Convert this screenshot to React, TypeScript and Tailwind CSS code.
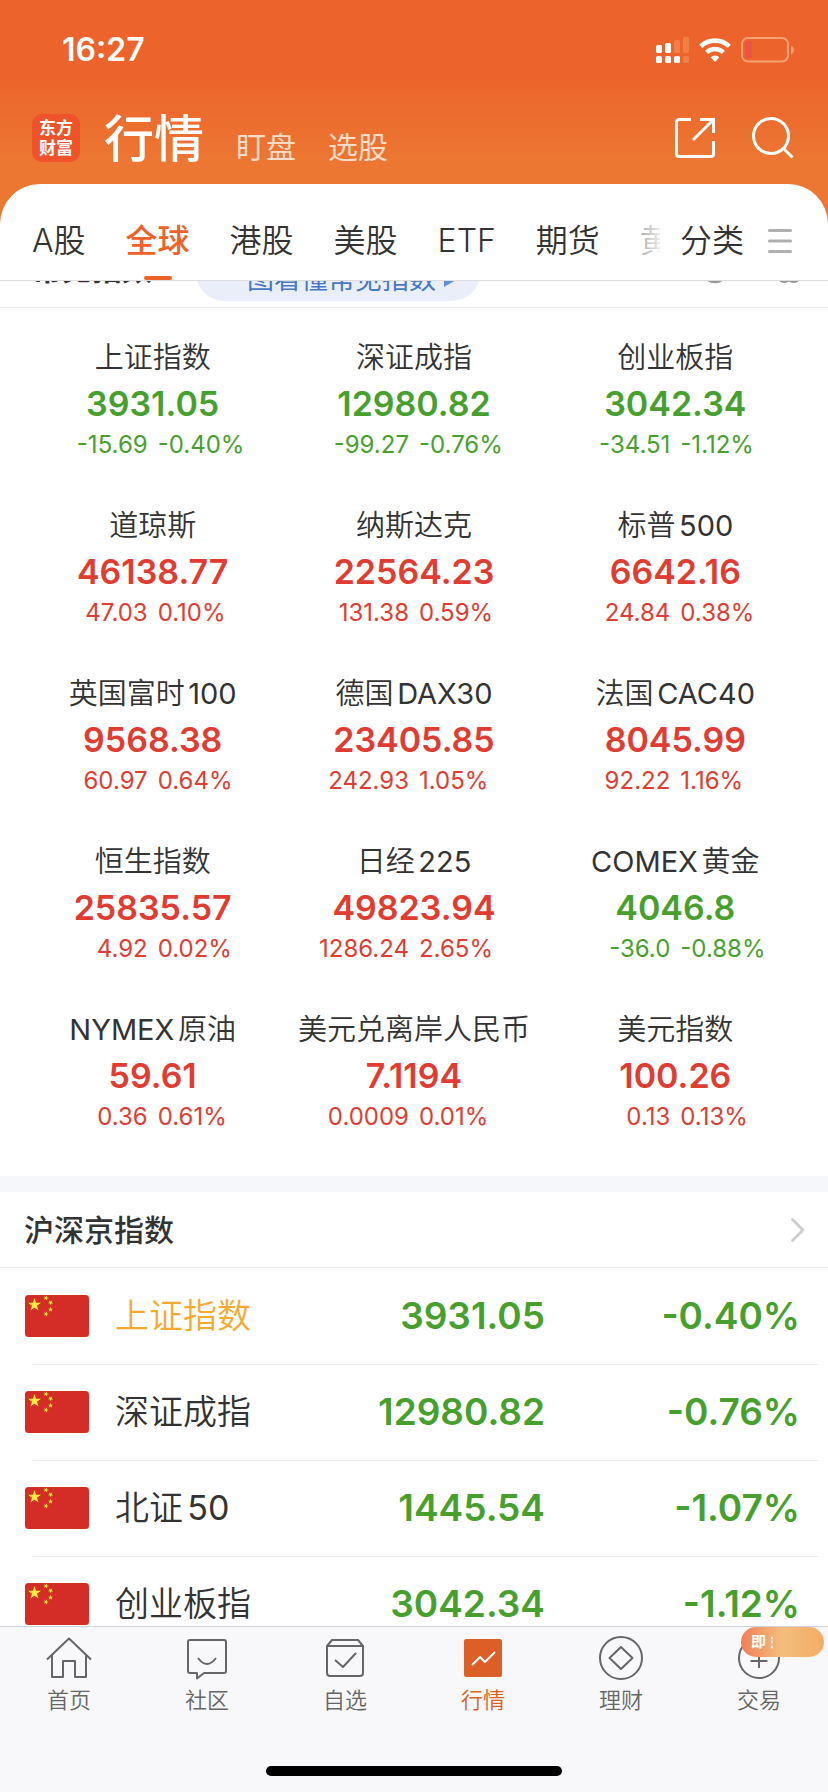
import type { ReactNode } from "react";

type Quote = { name: string; value: string; change: string; percent: string };

const quotes: Quote[] = [
  { name: "上证指数", value: "3931.05", change: "-15.69", percent: "-0.40%" },
  { name: "深证成指", value: "12980.82", change: "-99.27", percent: "-0.76%" },
  { name: "创业板指", value: "3042.34", change: "-34.51", percent: "-1.12%" },
  { name: "道琼斯", value: "46138.77", change: "47.03", percent: "0.10%" },
  { name: "纳斯达克", value: "22564.23", change: "131.38", percent: "0.59%" },
  { name: "标普500", value: "6642.16", change: "24.84", percent: "0.38%" },
  { name: "英国富时100", value: "9568.38", change: "60.97", percent: "0.64%" },
  { name: "德国DAX30", value: "23405.85", change: "242.93", percent: "1.05%" },
  { name: "法国CAC40", value: "8045.99", change: "92.22", percent: "1.16%" },
  { name: "恒生指数", value: "25835.57", change: "4.92", percent: "0.02%" },
  { name: "日经225", value: "49823.94", change: "1286.24", percent: "2.65%" },
  { name: "COMEX黄金", value: "4046.8", change: "-36.0", percent: "-0.88%" },
  { name: "NYMEX原油", value: "59.61", change: "0.36", percent: "0.61%" },
  { name: "美元兑离岸人民币", value: "7.1194", change: "0.0009", percent: "0.01%" },
  { name: "美元指数", value: "100.26", change: "0.13", percent: "0.13%" },
];

const domestic = [
  { name: "上证指数", value: "3931.05", percent: "-0.40%", marked: true },
  { name: "深证成指", value: "12980.82", percent: "-0.76%", marked: false },
  { name: "北证50", value: "1445.54", percent: "-1.07%", marked: false },
  { name: "创业板指", value: "3042.34", percent: "-1.12%", marked: false },
];

// Latin letters and digits look thinner than the Chinese glyphs beside them, so they get the regular weight.
function MixedText({ text }: { text: string }) {
  return (
    <>
      {text.split(/([A-Za-z0-9]+)/).map((part, index) =>
        index % 2 === 1 ? (
          <span key={index} className="font-normal">
            {part}
          </span>
        ) : (
          part
        ),
      )}
    </>
  );
}

function StatusBar() {
  return (
    <div className="flex h-[100px] items-center justify-between pr-[33px] pl-[62px]">
      <span className="text-[32px] leading-10 font-semibold">16:27</span>
      <div className="flex items-center gap-2.5">
        <svg width="33" height="26" viewBox="0 0 33 26" fill="currentColor" aria-hidden="true">
          <rect x="0" y="8" width="6" height="8" rx="1.6" />
          <rect x="9" y="6" width="6" height="10" rx="1.6" />
          <rect x="18" y="3" width="6" height="13" rx="1.6" fill="#f08048" />
          <rect x="27" y="0" width="6" height="16" rx="1.6" fill="#f08048" />
          <rect x="0" y="19" width="6" height="7" rx="1.6" />
          <rect x="9" y="19" width="6" height="7" rx="1.6" />
          <rect x="18" y="19" width="6" height="7" rx="1.6" />
          <rect x="27" y="19" width="6" height="7" rx="1.6" fill="#f08048" />
        </svg>
        <svg width="32" height="24" viewBox="0 0 32 24" fill="none" stroke="currentColor" aria-hidden="true">
          <path d="M1.8 8.4a20.4 20.4 0 0 1 28.4 0" strokeWidth="4.6" />
          <path d="M7.6 14.4a12.2 12.2 0 0 1 16.8 0" strokeWidth="4.4" />
          <path d="M11.6 19.2a6.4 6.4 0 0 1 8.8 0L16 24z" fill="currentColor" stroke="none" />
        </svg>
        <svg width="54" height="26" viewBox="0 0 54 26" fill="none" aria-hidden="true">
          <rect x="1" y="1" width="46" height="23.500" rx="6" stroke="#f3a273" strokeWidth="2" />
          <rect x="4" y="4" width="7" height="17.500" rx="3" fill="#ea5545" />
          <path d="M50 8.500c4 1.500 4 7.500 0 9z" fill="#f3a273" />
        </svg>
      </div>
    </div>
  );
}

function Header() {
  return (
    <header className="flex items-start justify-between pt-3.5 pr-[34px] pl-8">
      <div className="flex items-start">
        <div className="flex size-12 flex-col items-center justify-center rounded-[10px] bg-[#ee532b] text-[17px] leading-5 font-bold">
          <span>东方</span>
          <span>财富</span>
        </div>
        <nav className="-mt-[5px] ml-6 flex items-end gap-8">
          <a href="#quotes" className="text-[50px] leading-[60px] font-medium">
            行情
          </a>
          <a href="#watch" className="text-[30px] leading-[44px] text-[#fbdcc9]">
            盯盘
          </a>
          <a href="#pick" className="text-[30px] leading-[44px] text-[#fbdcc9]">
            选股
          </a>
        </nav>
      </div>
      <div className="flex gap-[36px] pt-[3px]">
        <button type="button" aria-label="分享">
          <svg width="42" height="42" viewBox="0 0 42 42" fill="none" stroke="currentColor" strokeWidth="3">
            <path d="M17 2.500H5A2.500 2.500 0 0 0 2.500 5v32A2.500 2.500 0 0 0 5 39.500h32a2.500 2.500 0 0 0 2.500-2.500V24" />
            <path d="M26 2.500h13.500V16M39 3 19 23" />
          </svg>
        </button>
        <button type="button" aria-label="搜索">
          <svg width="42" height="42" viewBox="0 0 42 42" fill="none" stroke="currentColor" strokeWidth="3">
            <circle cx="19" cy="19" r="17.500" />
            <path d="m31.500 31.500 9 9" />
          </svg>
        </button>
      </div>
    </header>
  );
}

function MarketTabs() {
  const tabs = ["A股", "全球", "港股", "美股", "ETF", "期货", "黄金"];
  return (
    <div className="flex h-[97px] shrink-0 items-stretch border-b border-[#dddddf] pl-8 text-[32px] leading-10 font-[350]">
      <nav className="relative flex min-w-0 flex-1 gap-10 overflow-hidden whitespace-nowrap">
        {tabs.map((tab) =>
          tab === "全球" ? (
            <a key={tab} href="#global" aria-current="page" className="flex flex-col items-center justify-between pt-[37px] font-medium text-[#ee6228]">
              {tab}
              <span className="h-1 w-7 rounded-full bg-[#ee6228]" />
            </a>
          ) : (
            <a key={tab} href="#market" className="pt-[37px]">
              {tab}
            </a>
          ),
        )}
        <span className="absolute inset-y-0 right-0 w-10 bg-linear-to-r from-white/30 to-white/90" />
      </nav>
      <button type="button" className="flex items-start gap-6 pt-[37px] pr-9 pl-5">
        分类
        <svg className="mt-2" width="24" height="24" viewBox="0 0 24 24" stroke="#b0b0b0" strokeWidth="3" strokeLinecap="round" aria-hidden="true">
          <path d="M1.500 1.500h21M1.500 12h21M1.500 22.500h21" />
        </svg>
      </button>
    </div>
  );
}

function CommonHeader() {
  return (
    <div className="flex h-[77px] items-center border-b border-[#ececec] pr-6 pl-8">
      <h2 className="text-[30px] leading-10 font-bold">常见指数</h2>
      <a href="#guide" className="mt-2 ml-11 flex h-14 items-center gap-2 rounded-full bg-[#e9eef8] pt-3.5 pr-6 pl-6 text-[27px] leading-9 text-[#4878c4]">
        一图看懂常见指数
        <svg width="12" height="14" viewBox="0 0 12 14" fill="#6090d4" aria-hidden="true">
          <path d="M0 0l12 7-12 7z" />
        </svg>
      </a>
      <div className="ml-auto flex gap-11 text-[#999999]">
        <button type="button" aria-label="帮助">
          <svg width="30" height="30" viewBox="0 0 30 30" fill="none" stroke="currentColor" strokeWidth="2.500">
            <circle cx="15" cy="15" r="13" />
            <path d="M11 12a4 4 0 1 1 5.500 3.500q-1.500.8-1.500 3M15 20v2.500" />
          </svg>
        </button>
        <button type="button" aria-label="设置">
          <svg width="30" height="30" viewBox="0 0 30 30" fill="none" stroke="currentColor" strokeWidth="2.500" strokeLinejoin="round">
            <path d="M8 3q3 2 7 0 4 2 7 0l6 8q-3 4 0 8l-5 8q-4 2-8-1-4 3-8 1l-5-8q3-4 0-8z" />
            <circle cx="15" cy="15" r="4.500" />
          </svg>
        </button>
      </div>
    </div>
  );
}

function QuoteCard({ name, value, change, percent, down }: Quote & { down: boolean }) {
  return (
    <a href="#quote" className={down ? "block pb-[42px] text-[#47a02d]" : "block pb-[42px] text-[#e03c32]"}>
      <div className="text-center text-[29px] leading-[44px] font-[350] whitespace-nowrap text-[#333333] [text-autospace:normal]">
        <MixedText text={name} />
      </div>
      <div className="text-center text-[34px] leading-[48px] font-semibold">{value}</div>
      <div className="grid grid-cols-2 gap-2.5 text-[24px] leading-[34px]">
        <span className="text-right">{change}</span>
        <span>{percent}</span>
      </div>
    </a>
  );
}

const STAR = "M0-1 .225-.309.951-.309.363.118.588.809 0 .382-.588.809-.363.118-.951-.309-.225-.309z";

function Flag() {
  return (
    <svg className="-ml-2 block" width="64" height="42" viewBox="0 0 64 42" role="img" aria-label="中国">
      <rect width="64" height="42" rx="3.500" fill="#d42c27" />
      <g fill="#fbea3c">
        <path d={STAR} transform="translate(9.500 10) scale(6.900)" />
        <path d={STAR} transform="translate(21 3) rotate(20) scale(2.800)" />
        <path d={STAR} transform="translate(25.500 7.500) rotate(40) scale(2.800)" />
        <path d={STAR} transform="translate(25.500 14.500) scale(2.800)" />
        <path d={STAR} transform="translate(21 19) rotate(20) scale(2.800)" />
      </g>
    </svg>
  );
}

function DomesticList() {
  return (
    <section>
      <a href="#domestic" className="flex h-[76px] items-center justify-between border-b border-[#ececec] pr-[23px] pl-6">
        <h2 className="text-[30px] leading-10 font-medium">沪深京指数</h2>
        <svg width="14" height="24" viewBox="0 0 14 24" fill="none" stroke="#cccccc" strokeWidth="2.800" strokeLinecap="round" strokeLinejoin="round" aria-hidden="true">
          <path d="M1.500 1.500 12 12 1.500 22.500" />
        </svg>
      </a>
      <div className="pr-2.5 pl-[33px]">
        <table className="w-full" aria-label="沪深京指数">
          <tbody>
            {domestic.map((row) => (
              <tr key={row.name} className="h-24 border-b border-[#ececec] text-[37px] leading-[48px] font-semibold text-[#47a02d]">
                <td className="w-[82px] p-0">
                  <Flag />
                </td>
                <th
                  scope="row"
                  className={
                    row.marked
                      ? "p-0 text-left text-[34px] font-[350] text-[#f5a931]"
                      : "p-0 text-left text-[34px] font-[350] text-[#333333] [text-autospace:normal]"
                  }
                >
                  <MixedText text={row.name} />
                </th>
                <td className="p-0 text-right">{row.value}</td>
                <td className="w-[273px] p-0 pr-[18px] text-right">{row.percent}</td>
              </tr>
            ))}
          </tbody>
        </table>
      </div>
    </section>
  );
}

function NavItem({ label, active, badge, children }: { label: string; active?: boolean; badge?: ReactNode; children: ReactNode }) {
  return (
    <a
      href="#nav"
      aria-current={active ? "page" : undefined}
      className={
        active
          ? "relative flex flex-1 flex-col items-center pt-2 text-[#dc5f27]"
          : "relative flex flex-1 flex-col items-center pt-2 text-[#666666]"
      }
    >
      <svg width="46" height="46" viewBox="0 0 46 46" fill="none" stroke="currentColor" strokeWidth="2" strokeLinejoin="round">
        {children}
      </svg>
      <span className="mt-[3px] text-[22px] leading-8 font-[350]">{label}</span>
      {badge}
    </a>
  );
}

function BottomNav() {
  return (
    <footer className="flex h-[166px] shrink-0 flex-col justify-between border-t border-[#d2d2dc] bg-[#f8f8fa] pb-4">
      <nav className="flex">
        <NavItem label="首页">
          <path d="M1 24.500 23 3.500l22 21M6 20v22h11V26h12v16h11V20" />
        </NavItem>
        <NavItem label="社区">
          <path d="M6 5h34a2 2 0 0 1 2 2v29a2 2 0 0 1-2 2H20l-7 5.500V38H6a2 2 0 0 1-2-2V7a2 2 0 0 1 2-2z" />
          <path d="M14 23q9 12 18 0" />
        </NavItem>
        <NavItem label="自选">
          <path d="M5 11h36v27a3 3 0 0 1-3 3H8a3 3 0 0 1-3-3zM5 11l5-6h26l5 6" />
          <path d="m13 25 8 7 13-14" />
        </NavItem>
        <NavItem label="行情" active>
          <rect x="4" y="4" width="38" height="38" rx="2.500" fill="currentColor" stroke="none" />
          <path d="m12 30 8-8 5 5 10-10" stroke="white" />
        </NavItem>
        <NavItem label="理财">
          <circle cx="23" cy="23" r="21" />
          <path d="M23 12 34.500 23 23 34 11.500 23z" />
        </NavItem>
        <NavItem
          label="交易"
          badge={
            <span className="absolute top-0 right-1 flex h-[30px] w-[83px] items-center rounded-full bg-linear-to-r from-[#f17e58] via-[#f3bd7c] to-[#f4ac66] pl-2.5 text-[15px] leading-5 font-bold text-white">
              即
              <span className="text-[12px]">⋮</span>
            </span>
          }
        >
          <circle cx="23" cy="23" r="20" />
          <path d="M23 15v18M14.500 26h17" />
        </NavItem>
      </nav>
      <div className="mx-auto h-2.5 w-[296px] rounded-full bg-black" />
    </footer>
  );
}

export default function App() {
  return (
    <div className="flex h-screen flex-col bg-[linear-gradient(#ec632b_70px,#ec7733_165px)] font-['Inter','Noto_Sans_CJK_SC',sans-serif] text-white">
      <div className="h-[184px] shrink-0">
        <StatusBar />
        <Header />
      </div>
      <main className="flex min-h-0 flex-1 flex-col rounded-t-[40px] bg-white text-[#333333]">
        <MarketTabs />
        <div className="min-h-0 flex-1 overflow-hidden">
          <div className="-mt-[50px]">
            <CommonHeader />
            <section className="grid grid-cols-3 border-b-16 border-[#f5f7fa] px-[22px] pt-7">
              {quotes.map((quote) => (
                <QuoteCard key={quote.name} {...quote} down={quote.change.startsWith("-")} />
              ))}
            </section>
            <DomesticList />
          </div>
        </div>
      </main>
      <BottomNav />
    </div>
  );
}
